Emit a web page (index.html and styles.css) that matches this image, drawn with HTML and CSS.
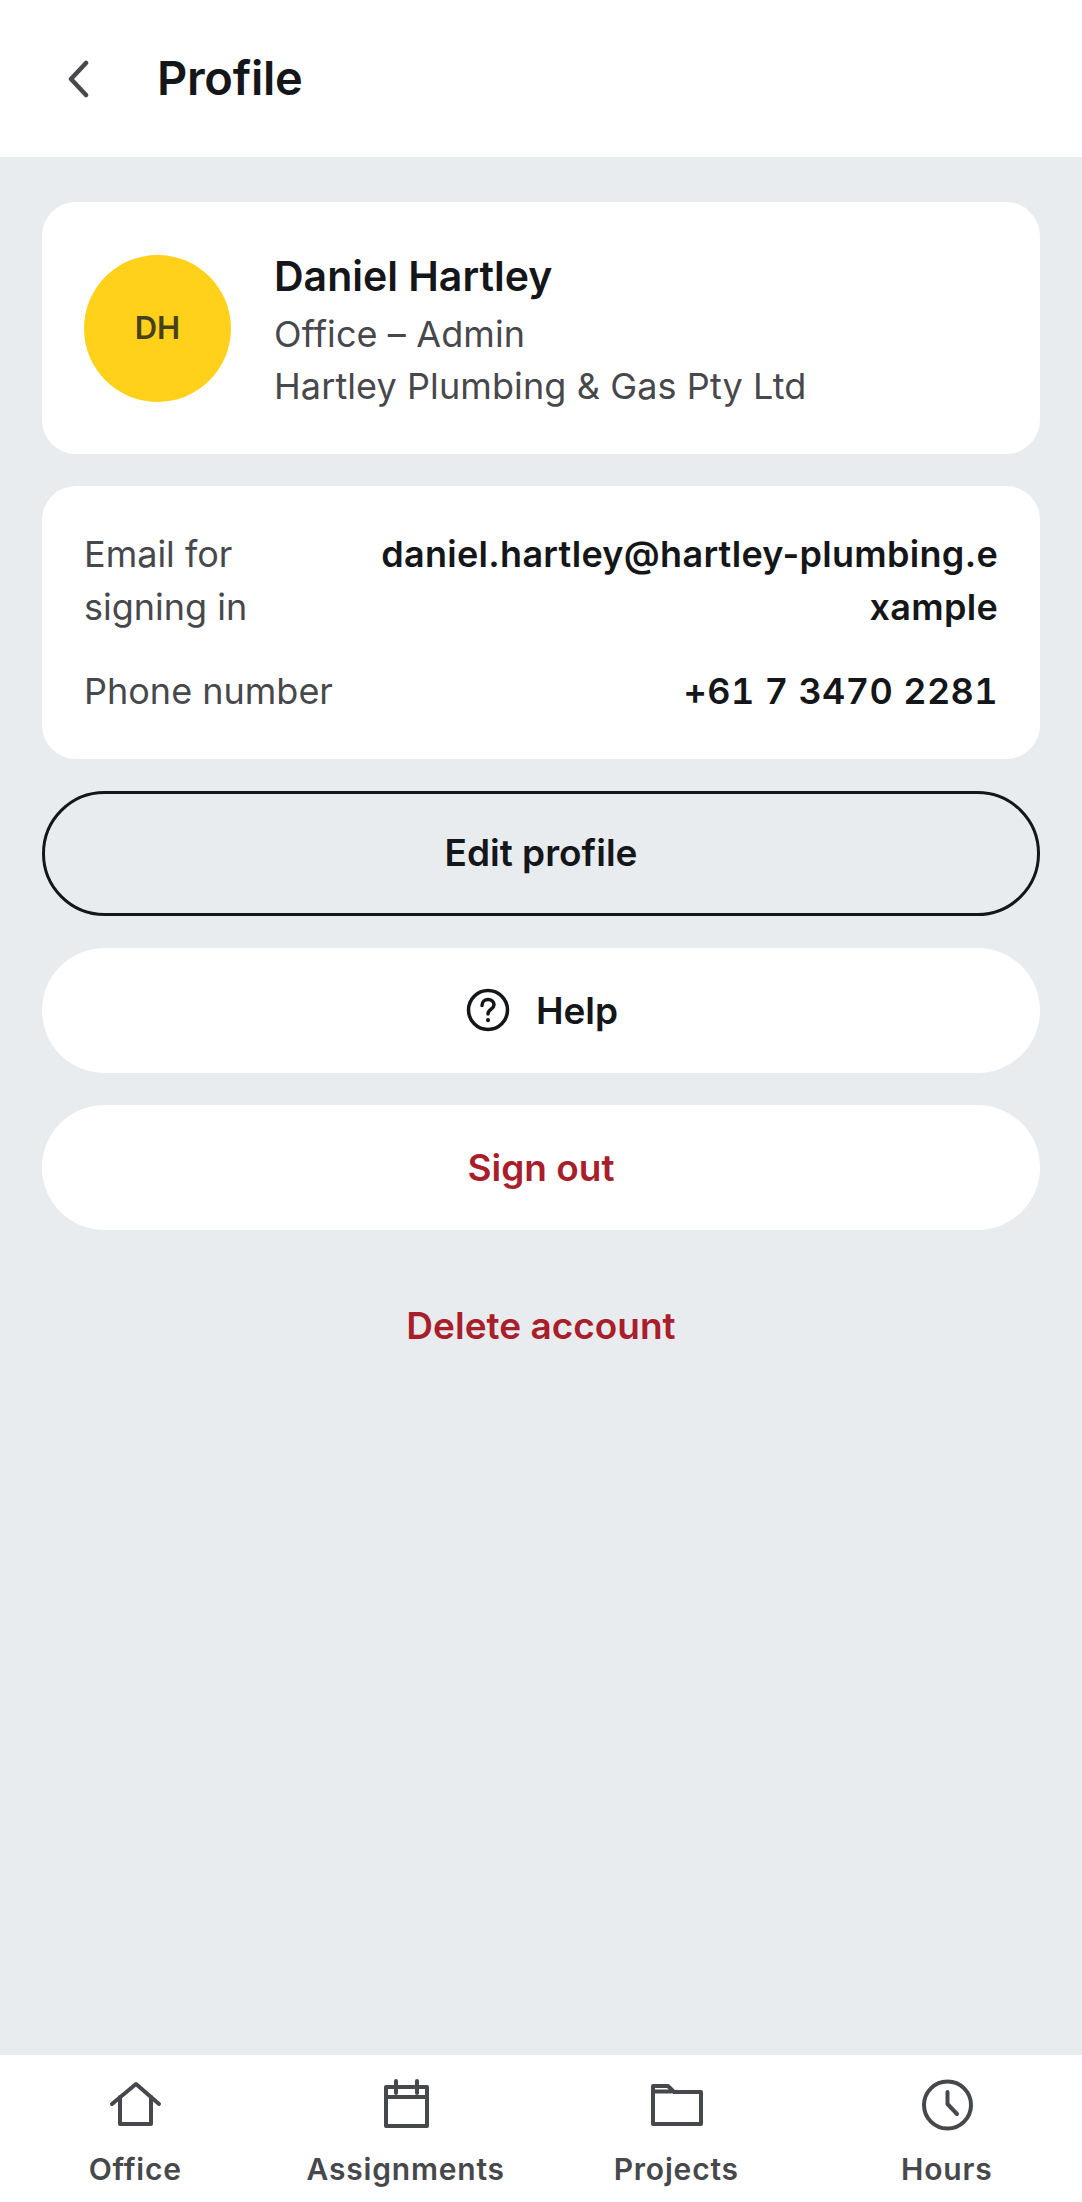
FILE: index.html
```html
<!DOCTYPE html>
<html lang="en">
  <head>
    <meta charset="UTF-8" />
    <meta name="viewport" content="width=device-width, initial-scale=1.0" />
    <title>Profile</title>
    <link rel="stylesheet" href="styles.css">
  </head>
  <body>
    <!-- Top bar -->
    <header class="top-bar">
      <svg class="back-icon" viewBox="0 0 24 38" fill="none" stroke="#47484c" stroke-width="4.500" stroke-linecap="round" stroke-linejoin="round">
        <path d="M20 3 L5 19 L20 35" />
      </svg>
      <h1>Profile</h1>
    </header>

    <main class="content">
      <!-- Name card -->
      <section class="card user-card">
        <div class="avatar">DH</div>
        <div class="user-text">
          <div class="user-name">Daniel Hartley</div>
          <div class="user-line">Office – Admin</div>
          <div class="user-line">Hartley Plumbing &amp; Gas Pty Ltd</div>
        </div>
      </section>

      <!-- Account details -->
      <section class="card details-card">
        <div class="detail-row">
          <div class="detail-label">Email for<br />signing in</div>
          <div class="detail-value">daniel.hartley@hartley-plumbing.example</div>
        </div>
        <div class="detail-row">
          <div class="detail-label">Phone number</div>
          <div class="detail-value phone-value">+61 7 3470 2281</div>
        </div>
      </section>

      <button class="btn btn-outline">Edit profile</button>
      <button class="btn">
        <svg class="help-icon" viewBox="0 0 44 44" fill="none" stroke="#14161a" stroke-width="3.500" stroke-linecap="round">
          <circle cx="22" cy="22" r="19.500" />
          <path d="M16 17.500 C16 13.500 19 11.500 22 11.500 C25.500 11.500 28 13.800 28 16.800 C28 21 22 21.500 22 26" />
          <path d="M22 32 L22 32.200" stroke-width="4" />
        </svg>
        Help
      </button>
      <button class="btn btn-danger">Sign out</button>
      <button class="btn-plain">Delete account</button>
    </main>

    <!-- Bottom navigation -->
    <nav class="bottom-nav">
      <div class="nav-item">
        <svg class="nav-icon" viewBox="0 0 54 54" fill="none" stroke="#47484c" stroke-width="4" stroke-linecap="round" stroke-linejoin="round">
          <path d="M4 25 L28 5 L51 25" />
          <path d="M12 18 L12 45 L43 45 L43 18" />
        </svg>
        <span>Office</span>
      </div>
      <div class="nav-item">
        <svg class="nav-icon" viewBox="0 0 54 54" fill="none" stroke="#47484c" stroke-width="4" stroke-linecap="round" stroke-linejoin="round">
          <rect x="7" y="8" width="41" height="39" />
          <path d="M7 18 L48 18" />
          <path d="M17 2 L17 14" />
          <path d="M38 2 L38 14" />
        </svg>
        <span>Assignments</span>
      </div>
      <div class="nav-item">
        <svg class="nav-icon" viewBox="0 0 54 54" fill="none" stroke="#47484c" stroke-width="4" stroke-linecap="round" stroke-linejoin="round">
          <path d="M4 7 L19 7 L25 13 L52 13 L52 45 L4 45 Z" />
          <path d="M4 12.500 L22 12.500" />
        </svg>
        <span>Projects</span>
      </div>
      <div class="nav-item">
        <svg class="nav-icon" viewBox="0 0 54 54" fill="none" stroke="#47484c" stroke-width="4" stroke-linecap="round" stroke-linejoin="round">
          <circle cx="27.500" cy="26" r="23.500" />
          <path d="M27.500 13 L27.500 25 L37 35" />
        </svg>
        <span>Hours</span>
      </div>
    </nav>
  </body>
</html>
```

FILE: styles.css
```css
* {
  box-sizing: border-box;
}

body {
  margin: 0;
  height: 2202px;
  display: flex;
  flex-direction: column;
  background-color: #e9ecef;
  font-family: "Inter", "Liberation Sans", sans-serif;
  color: #14161a;
}

/* Top bar */
.top-bar {
  height: 157px;
  display: flex;
  align-items: center;
  padding-left: 66px;
  background-color: #fff;
}

.back-icon {
  width: 24px;
  height: 38px;
}

.top-bar h1 {
  margin: 0 0 2px 67px;
  font-size: 47px;
  font-weight: 600;
  letter-spacing: -0.3px;
}

/* Main column */
.content {
  flex: 1;
  display: flex;
  flex-direction: column;
  gap: 32px;
  padding: 45px 42px 0;
}

.card {
  background-color: #fff;
  border-radius: 34px;
}

.user-card {
  height: 252px;
  display: flex;
  align-items: center;
  padding-left: 42px;
}

.avatar {
  width: 147px;
  height: 147px;
  flex-shrink: 0;
  display: flex;
  justify-content: center;
  align-items: center;
  padding-bottom: 2px;
  border-radius: 50%;
  background-color: #ffd11a;
  color: #47401c;
  font-size: 31px;
  font-weight: 600;
}

.user-text {
  margin-left: 43px;
  padding-top: 6px;
}

.user-name {
  font-size: 41px;
  font-weight: 600;
  line-height: 52px;
  margin-bottom: 6px;
}

.user-line {
  font-size: 36px;
  line-height: 52px;
  color: #47484c;
  letter-spacing: 0.1px;
}

.details-card {
  height: 273px;
  padding: 42px 42px 0;
}

.detail-row {
  display: flex;
  justify-content: space-between;
  font-size: 36px;
  line-height: 53px;
  margin-bottom: 31px;
}

.detail-label {
  flex-shrink: 0;
  color: #47484c;
}

.detail-value {
  max-width: 622px;
  font-weight: 600;
  letter-spacing: 0.3px;
  text-align: right;
  word-break: break-all;
}

.phone-value {
  font-variant-numeric: tabular-nums;
  letter-spacing: 0.4px;
}

/* Buttons */
.btn {
  height: 125px;
  display: flex;
  justify-content: center;
  align-items: center;
  gap: 26px;
  padding-bottom: 2px;
  border: none;
  border-radius: 63px;
  background-color: #fff;
  color: #14161a;
  font-family: inherit;
  font-size: 37px;
  font-weight: 600;
}

.btn-outline {
  padding-bottom: 4px;
  background-color: transparent;
  border: 3px solid #14161a;
}

.btn-danger {
  color: #a81e2a;
}

.btn-plain {
  height: 126px;
  border: none;
  background: none;
  color: #a81e2a;
  font-family: inherit;
  font-size: 37px;
  font-weight: 600;
}

.help-icon {
  width: 44px;
  height: 44px;
  margin-left: 2px;
}

/* Bottom navigation */
.bottom-nav {
  height: 147px;
  display: grid;
  grid-template-columns: repeat(4, 1fr);
  background-color: #fff;
}

.nav-item {
  display: flex;
  flex-direction: column;
  align-items: center;
  padding-top: 24px;
  color: #47484c;
  font-size: 30px;
  font-weight: 600;
  letter-spacing: 0.8px;
}

.nav-icon {
  width: 54px;
  height: 54px;
  margin-bottom: 18px;
}
```
